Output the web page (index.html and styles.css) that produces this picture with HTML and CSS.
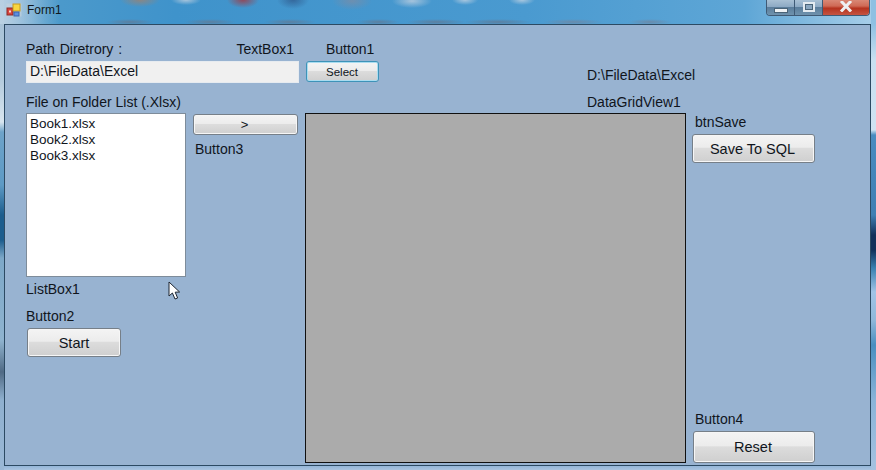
FILE: index.html
```html
<!DOCTYPE html>
<html lang="en">
<head>
<meta charset="utf-8">
<title>Form1</title>
<link rel="stylesheet" href="styles.css">
</head>
<body>
<div class="window">
  <header class="titlebar">
    <svg class="app-icon" width="16" height="14" viewBox="0 0 16 14">
      <rect x="0.5" y="0.5" width="15" height="13" fill="#c9d3dd" opacity=".55"/>
      <rect x="1" y="5" width="6" height="7" fill="#d8433c" stroke="#8c2a26"/>
      <rect x="3" y="7.5" width="2" height="2" fill="#f3d9c8"/>
      <rect x="7" y="1" width="7" height="7" fill="#f8d640" stroke="#c69a1e"/>
      <rect x="8" y="9" width="5" height="4" fill="#5d8fe0" stroke="#3a63ad"/>
    </svg>
    <span class="title-text">Form1</span>
    <div class="caption-buttons">
      <div class="cap cap-min"><span class="glyph-min"></span></div>
      <div class="cap cap-max"><span class="glyph-max"></span></div>
      <div class="cap cap-close">
        <svg width="14" height="11" viewBox="0 0 14 11"><path d="M2 0 L12 10.5 M12 0 L2 10.5" stroke="#eef0f2" stroke-width="3" fill="none"/></svg>
      </div>
    </div>
  </header>
  <main class="client">
    <section class="col-a">
      <div class="label-row">
        <span class="label label-path">Path Diretrory :</span>
        <span class="label label-tb">TextBox1</span>
      </div>
      <div class="textbox">D:\FileData\Excel</div>
      <div class="list-row">
        <div class="list-col">
          <span class="label">File on Folder List (.Xlsx)</span>
          <ul class="listbox">
            <li>Book1.xlsx</li>
            <li>Book2.xlsx</li>
            <li>Book3.xlsx</li>
          </ul>
          <span class="label label-lb">ListBox1</span>
          <span class="label label-b2">Button2</span>
          <button class="btn btn-start">Start</button>
        </div>
        <div class="arrow-col">
          <button class="btn btn-arrow">&gt;</button>
          <span class="label label-b3">Button3</span>
        </div>
      </div>
    </section>
    <section class="col-b">
      <div class="top-b">
        <div class="select-col">
          <span class="label label-b1">Button1</span>
          <button class="btn btn-select">Select</button>
        </div>
        <div class="path-col">
          <span class="label">D:\FileData\Excel</span>
          <span class="label label-dgv">DataGridView1</span>
        </div>
      </div>
      <div class="grid-view"></div>
    </section>
    <section class="col-c">
      <span class="label label-save">btnSave</span>
      <button class="btn btn-save">Save To SQL</button>
      <span class="label label-b4">Button4</span>
      <button class="btn btn-reset">Reset</button>
    </section>
    <svg class="cursor" width="13" height="20" viewBox="0 0 13 20">
      <path d="M1 1 L1 15 L4.4 12 L7 18 L9.6 17 L7.2 11.2 L11.6 11 Z" fill="#fff" stroke="#1d2530" stroke-width="1"/>
    </svg>
  </main>
</div>
</body>
</html>
```
FILE: styles.css
```css
* { box-sizing: border-box; }
html, body { margin: 0; padding: 0; }
body {
  width: 876px;
  height: 470px;
  overflow: hidden;
  font-family: "Liberation Sans", Arial, sans-serif;
  font-size: 14px;
  color: #10151c;
}
.window {
  width: 876px;
  height: 470px;
  display: flex;
  flex-direction: column;
  padding: 0 5px 4px 4px;
  background:
    linear-gradient(to bottom, #a9c3d8 24px, #b4cbdd 80px, #d8e5ef 122px, #6ea3c9 132px, #5d9ac5 185px, #1c5d8d 215px, #1c5d8d 240px, #7da8c8 258px, #8fb3cf 340px, #506a85 372px, #8fb0cf 400px, #9ab8d6 470px) left top / 4px 470px no-repeat,
    linear-gradient(to bottom, #8fc0e2 24px, #c8e0f0 60px, #cfe3f2 130px, #4a8cc0 135px, #3f7fb3 215px, #12305a 235px, #12305a 250px, #3a80b0 268px, #a0c4e6 292px, #8fb8da 320px, #4a8fc0 345px, #8ab4d8 400px, #a4c2e0 470px) right top / 5px 470px no-repeat,
    radial-gradient(ellipse 20px 7px at 140px 0, #8a8684, transparent),
    radial-gradient(ellipse 15px 5px at 186px 0, #a6c4dc, transparent),
    radial-gradient(ellipse 16px 8px at 243px 0, #8f4a5c, transparent),
    radial-gradient(ellipse 16px 9px at 293px 0, #34689c, transparent),
    radial-gradient(ellipse 20px 9px at 352px 1px, #6d8fb0, transparent),
    radial-gradient(ellipse 20px 7px at 412px 1px, #a6c4dc, transparent),
    radial-gradient(ellipse 13px 5px at 465px 0, #a9c7df, transparent),
    radial-gradient(ellipse 13px 5px at 522px 0, #a9c7df, transparent),
    radial-gradient(ellipse 24px 3px at 130px 22px, #5d7f9f, transparent),
    radial-gradient(ellipse 26px 3px at 210px 22px, #5d7f9f, transparent),
    radial-gradient(ellipse 26px 3px at 290px 22px, #5d7f9f, transparent),
    radial-gradient(ellipse 22px 3px at 378px 22px, #5d7f9f, transparent),
    radial-gradient(ellipse 30px 3px at 436px 22px, #5d7f9f, transparent),
    radial-gradient(ellipse 34px 3px at 498px 22px, #5d7f9f, transparent),
    radial-gradient(ellipse 30px 3px at 573px 22px, #6a8aaa, transparent),
    radial-gradient(ellipse 22px 3px at 650px 22px, #6a8aaa, transparent),
    linear-gradient(to bottom, transparent 465px, #8fb2d6 465px, #a9c4e0 470px),
    linear-gradient(to right, #7fb0d8 0, #4d9acb 5%, #3f93cb 20%, #4a9ad0 60%, #5ea6d6 85%, #a9cfe9 100%);
}
.titlebar {
  height: 24px;
  flex: none;
  display: flex;
  align-items: flex-start;
  margin: 0 -5px 0 -4px;
  padding: 3px 6px 0 6px;
  background: linear-gradient(to right, #b9d0e2 0, transparent 60px);
}
.app-icon { flex: none; }
.title-text { font-size: 12px; line-height: 14px; margin-left: 5px; color: #101820; }
.caption-buttons {
  margin: -3px 0 0 auto;
  width: 104px;
  height: 16px;
  display: flex;
  border: 1px solid #3f5a75;
  border-top: 0;
  border-radius: 0 0 4px 4px;
  overflow: hidden;
  flex: none;
}
.cap { display: flex; align-items: center; justify-content: center; }
.cap-min, .cap-max {
  width: 28px;
  background: linear-gradient(to bottom, #a8c0d4 0, #8daac4 45%, #5b7e9c 50%, #6f92ad 100%);
  border-right: 1px solid #3f5a75;
}
.cap-close {
  flex: 1;
  padding-bottom: 3px;
  background: linear-gradient(to bottom, #d98876 0, #cf6a56 40%, #b5331f 55%, #c55442 100%);
}
.glyph-min { width: 14px; height: 5px; margin-top: 5px; background: #eef2f5; border: 1px solid #4a6478; }
.glyph-max { width: 12px; height: 10px; margin-bottom: 2px; border: 2px solid #e4ebf1; outline: 1px solid #4a6478; outline-offset: -3px; background: #8aa6bf; }
.client {
  position: relative;
  flex: 1;
  display: flex;
  align-items: flex-start;
  padding: 17px 0 0 21px;
  background: #98b3d1;
  border: 1px solid #2c4a63;
  height: 442px;
}
.label { display: block; height: 15px; line-height: 15px; white-space: nowrap; }
.label-path { word-spacing: 1px; }
.col-a { width: 273px; flex: none; }
.label-row { display: flex; justify-content: space-between; padding-right: 5px; }
.textbox {
  margin-top: 4px;
  height: 22px;
  line-height: 19px;
  padding-left: 3px;
  background: #f0f0f0;
  border: 1px solid #e6ebf0;
}
.list-row { display: flex; margin-top: 12px; }
.list-col { width: 160px; flex: none; }
.listbox {
  list-style: none;
  margin: 3px 0 0;
  padding: 2px 0 0 3px;
  width: 160px;
  height: 164px;
  background: #fff;
  border: 1px solid #7e8c9a;
  font-size: 13.5px;
}
.listbox li { height: 16px; line-height: 16px; }
.label-lb { margin-top: 5px; }
.label-b2 { margin-top: 12px; }
.btn {
  display: block;
  padding: 0;
  font: inherit;
  font-size: 14.5px;
  color: #10151c;
  border: 1px solid #767f88;
  border-radius: 3px;
  background: linear-gradient(to bottom, #f4f4f4 0, #ececec 45%, #dcdcdc 50%, #cfcfcf 100%);
  box-shadow: inset 0 0 0 1px #f6f6f6;
}
.btn-start { margin: 4px 0 0 1px; width: 94px; height: 29px; }
.arrow-col { margin-left: 7px; padding-top: 19px; width: 105px; }
.btn-arrow { width: 105px; height: 21px; font-size: 13px; padding-right: 2px; }
.label-b3 { margin: 7px 0 0 2px; }
.col-b { width: 381px; margin-left: 6px; flex: none; }
.top-b { display: flex; height: 71px; }
.select-col { width: 282px; flex: none; }
.label-b1 { margin-left: 21px; }
.btn-select {
  margin: 4px 0 0 1px;
  width: 73px;
  height: 21px;
  font-size: 11.5px;
  padding-right: 1px;
  border-color: #3e93b8;
  box-shadow: inset 0 0 0 1px #a9dcf0;
}
.path-col { padding-top: 26px; }
.label-dgv { margin-top: 12px; }
.grid-view { height: 350px; background: #ababab; border: 1px solid #101010; }
.col-c { margin-left: 6px; width: 123px; flex: none; padding-top: 73px; }
.label-save { margin-left: 3px; }
.btn-save { margin-top: 4px; width: 123px; height: 29px; padding-right: 2px; }
.label-b4 { margin: 249px 0 0 3px; }
.btn-reset { margin: 4px 0 0 1px; width: 122px; height: 32px; padding-right: 2px; }
.cursor { position: absolute; left: 163px; top: 256px; }
```
